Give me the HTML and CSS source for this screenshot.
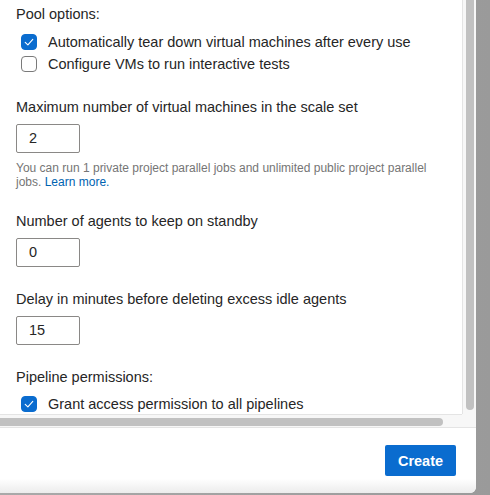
FILE: index.html
```html
<!DOCTYPE html>
<html lang="en">
<head>
<meta charset="utf-8">
<title>Pool options</title>
<link rel="stylesheet" href="styles.css">
</head>
<body>
<div class="panel">
  <div class="scroller">
    <div class="content">
      <div class="group-title">Pool options:</div>
      <div class="checks">
        <label class="check-row">
          <span class="box checked"><svg viewBox="0 0 16 16" width="16" height="16"><path d="M4.2 8.3 L6.9 10.9 L11.8 5.4" fill="none" stroke="#fff" stroke-width="1.1" stroke-linecap="round" stroke-linejoin="round"/></svg></span>
          <span>Automatically tear down virtual machines after every use</span>
        </label>
        <label class="check-row">
          <span class="box"></span>
          <span>Configure VMs to run interactive tests</span>
        </label>
      </div>

      <div class="field">
        <div class="label">Maximum number of virtual machines in the scale set</div>
        <div class="input">2</div>
        <p class="help">You can run 1 private project parallel jobs and unlimited public project parallel jobs. <a href="#" class="link">Learn more.</a></p>
      </div>

      <div class="field">
        <div class="label">Number of agents to keep on standby</div>
        <div class="input">0</div>
      </div>

      <div class="field">
        <div class="label">Delay in minutes before deleting excess idle agents</div>
        <div class="input">15</div>
      </div>

      <div class="field">
        <div class="group-title">Pipeline permissions:</div>
        <div class="checks single">
          <label class="check-row">
            <span class="box checked"><svg viewBox="0 0 16 16" width="16" height="16"><path d="M4.2 8.3 L6.9 10.9 L11.8 5.4" fill="none" stroke="#fff" stroke-width="1.1" stroke-linecap="round" stroke-linejoin="round"/></svg></span>
            <span>Grant access permission to all pipelines</span>
          </label>
        </div>
      </div>
    </div>
    <div class="vscroll"><div class="vthumb"></div></div>
    <div class="hscroll"><div class="hthumb"></div></div>
    <div class="corner"></div>
  </div>
  <div class="footer">
    <button class="primary">Create</button>
  </div>
</div>
</body>
</html>
```

FILE: styles.css
```css
* { box-sizing: border-box; }
html, body { margin: 0; padding: 0; }
body {
  width: 490px;
  height: 495px;
  overflow: hidden;
  background: linear-gradient(to right, #a9a9a9 0%, #9a9a9a 100%);
  font-family: "Liberation Sans", Arial, sans-serif;
  color: #262626;
  font-size: 14.5px;
}
.panel {
  width: 476px;
  height: 493px;
  background: #fff;
  border-bottom-right-radius: 6px;
  display: flex;
  flex-direction: column;
  overflow: hidden;
}
.scroller {
  display: grid;
  grid-template-columns: 462px 14px;
  grid-template-rows: 414px 14px;
  flex: none;
}
.content {
  overflow: hidden;
  padding: 4px 0 0 16px;
  width: 462px;
}
.group-title, .label {
  line-height: 20px;
  height: 20px;
  white-space: nowrap;
}
.checks {
  margin-top: 7px;
  padding-left: 5px;
}
.checks.single { margin-top: 6px; }
.check-row {
  display: flex;
  align-items: center;
  height: 22px;
  gap: 11px;
  white-space: nowrap;
}
.box {
  width: 16px;
  height: 16px;
  border: 1px solid #7a7a7a;
  border-radius: 4px;
  background: #fff;
  flex: none;
  display: flex;
}
.box.checked {
  background: #0a6ccf;
  border-color: #0a6ccf;
}
.box.checked svg { margin: -1px; }
.field { margin-top: 22px; }
.input {
  margin-top: 7px;
  width: 64px;
  height: 29px;
  border: 1px solid #8a8886;
  border-radius: 2px;
  padding: 0 12px;
  line-height: 27px;
}
.help {
  margin: 8px 0 0;
  width: 432px;
  font-size: 12px;
  line-height: 14px;
  color: #757575;
}
.link { color: #0063b1; text-decoration: none; }
.vscroll {
  background: #f7f7f7;
  border-left: 1px solid #e4e4e4;
  position: relative;
}
.vthumb {
  position: absolute;
  left: 3px;
  top: -20px;
  width: 8px;
  height: 430px;
  background: #c1c1c1;
  border-radius: 4px;
}
.hscroll {
  background: #f7f7f7;
  border-top: 1px solid #e4e4e4;
  border-bottom: 1px solid #e4e4e4;
  position: relative;
}
.hthumb {
  position: absolute;
  left: -4px;
  top: 3px;
  width: 447px;
  height: 8px;
  background: #c1c1c1;
  border-radius: 4px;
}
.corner {
  background: #f7f7f7;
  border-bottom: 1px solid #e4e4e4;
}
.footer {
  flex: 1;
  display: flex;
  justify-content: flex-end;
  align-items: flex-start;
  padding: 17px 20px 0 0;
  background: linear-gradient(to bottom, #fff 0%, #fff 78%, #ececec 100%);
}
.primary {
  width: 71px;
  height: 31px;
  border: none;
  border-radius: 2px;
  background: #0a6ccf;
  color: #fff;
  font-family: "Liberation Sans", Arial, sans-serif;
  font-weight: bold;
  font-size: 14.5px;
  padding: 0;
}
```
